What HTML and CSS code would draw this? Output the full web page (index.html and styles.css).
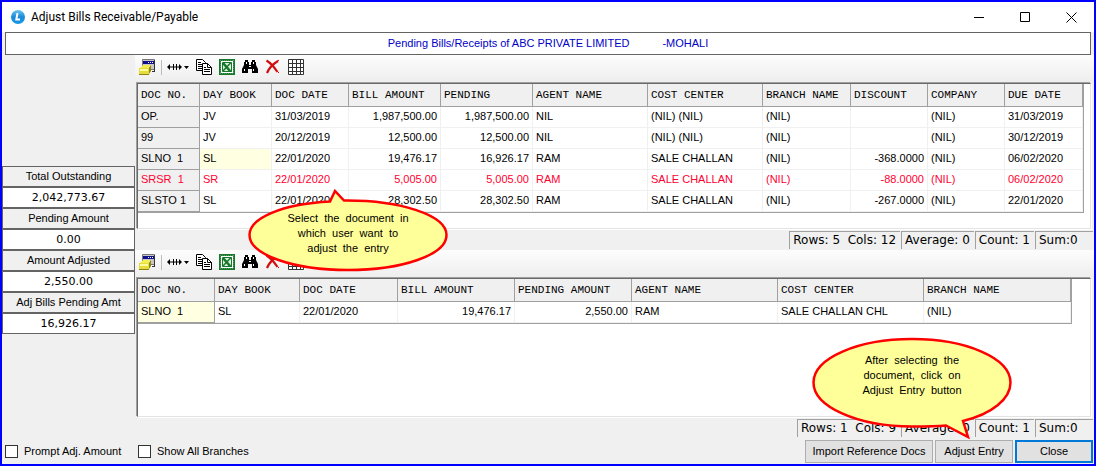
FILE: index.html
```html
<!DOCTYPE html>
<html lang="en">
<head>
	<meta charset="UTF-8">
	<title>Adjust Bills Receivable/Payable</title>
	<link rel="stylesheet" href="styles.css">
</head>
<body>
	<!-- toolbar icons, used by both grids -->
	<svg class="icons" width="0" height="0" aria-hidden="true">
		<symbol id="i-form" viewBox="0 0 16 16">
			<path fill="#c8c8c8" stroke="#777" d="M3.5.5h12v10h-12z"/>
			<path fill="#10108c" d="M4 2h11v3H4z"/>
			<path fill="#fff" d="M9 3h1v1H9zM11 3h1v1h-1zM13 3h1v1h-1z"/>
			<path fill="#333" d="M15 1h1v12h-3v-1h2z"/>
			<path fill="#f4ee52" d="M1 9l3-3h8l-2 3z"/>
			<path fill="#e6dc3c" d="M0 9h10v6H0z"/>
			<path fill="#fffca0" d="M1 10h8v2H1z"/>
			<path fill="#8c8410" d="M10 9l2-3v6l-2 3zM0 15h10v1H0z"/>
		</symbol>
		<symbol id="i-width" viewBox="0 0 22 16">
			<path fill="#000" d="M0 8l3-3v2.500h3V5h1v2.500h2V5h1v2.500h2V5l3 3-3 3V8.500h-2V11H9V8.500H7V11H6V8.500H3V11zM17 7h5l-2.500 3z"/>
		</symbol>
		<symbol id="i-copy" viewBox="0 0 16 16">
			<path fill="#fff" stroke="#000" d="M.5.5h6l3 3v8h-9z"/>
			<path stroke="#000" d="M2 3.500h3M2 5.500h5M2 7.500h5M2 9.500h5"/>
			<path fill="#fff" stroke="#000" d="M6.500 4.500h5l4 4v7h-9z"/>
			<path fill="none" stroke="#000" d="M11.500 4.500v4h4M8 8.500h2M8 10.500h6M8 12.500h6"/>
		</symbol>
		<symbol id="i-excel" viewBox="0 0 16 16">
			<path fill="#fff" stroke="#17772a" stroke-width="2" d="M1 1h14v14H1z"/>
			<path fill="none" stroke="#4f9c5e" stroke-dasharray="1 1" d="M1 1.500h14M1 14.500h14M1.500 1v14M14.500 1v14"/>
			<path fill="#dcefe0" stroke="#17772a" d="M3.500 3.500h9v9h-9z"/>
			<path stroke="#17772a" stroke-width="2.500" d="M4 4l7 8"/>
			<path stroke="#17772a" stroke-width="1.500" d="M12 3.500L4 12M9 12h4"/>
		</symbol>
		<symbol id="i-find" viewBox="0 0 16 16">
			<path fill="#000" d="M3 1h3v2h1v3h2V3h1V1h3v2h1v3l2 4v4h-6v-4H6v4H0v-4l2-4V3h1z"/>
			<path fill="#fff" d="M4 3h1v2H4zM11 3h1v2h-1zM2 10h1v2H2zM11 10h1v2h-1zM7 7h2v1H7z"/>
		</symbol>
		<symbol id="i-delete" viewBox="0 0 16 16">
			<path fill="none" stroke="#d01010" stroke-width="2.200" d="M1.500 1.500c5 3 8 7 11 11.500M13 2C8 5 4 9 2 14"/>
			<path stroke="#d01010" d="M12 2.500l2-1.500M13 13l1 1"/>
		</symbol>
		<symbol id="i-grid" viewBox="0 0 16 16">
			<path fill="#fff" stroke="#333" d="M.5.5h15v15H.5z"/>
			<path stroke="#333" d="M4.500 0v16M8.500 0v16M12.500 0v16M0 4.500h16M0 8.500h16M0 12.500h16"/>
		</symbol>
	</svg>

	<div class="window">
		<header class="titlebar">
			<svg class="logo" viewBox="0 0 14 14" aria-hidden="true">
				<defs>
					<linearGradient id="ball" x1="0" y1="0" x2="0" y2="1">
						<stop offset="0" stop-color="#6cc4f4"/>
						<stop offset=".5" stop-color="#1c8ad8"/>
						<stop offset="1" stop-color="#1498e8"/>
					</linearGradient>
				</defs>
				<circle cx="7" cy="7" r="7" fill="url(#ball)"/>
				<path fill="none" stroke="#fff" stroke-width="2" d="M6.500 3L5.300 9.500H9"/>
			</svg>
			<h1>Adjust Bills Receivable/Payable</h1>
			<div class="winbtns">
				<button type="button" aria-label="Minimize"><svg viewBox="0 0 11 11"><path d="M0 5.500h10"/></svg></button>
				<button type="button" aria-label="Maximize"><svg viewBox="0 0 11 11"><path d="M.5.5h9v9h-9z"/></svg></button>
				<button type="button" aria-label="Close window"><svg viewBox="0 0 11 11"><path d="M.5.5l10 10M10.500.5l-10 10"/></svg></button>
			</div>
		</header>

		<div class="caption"><span>Pending Bills/Receipts of ABC PRIVATE LIMITED</span><span>-MOHALI</span></div>

		<div class="content">
			<dl class="totals">
				<dt>Total Outstanding</dt>
				<dd>2,042,773.67</dd>
				<dt>Pending Amount</dt>
				<dd>0.00</dd>
				<dt>Amount Adjusted</dt>
				<dd>2,550.00</dd>
				<dt>Adj Bills Pending Amt</dt>
				<dd>16,926.17</dd>
			</dl>

			<main class="panes">
				<section class="pane">
					<div class="toolbar">
						<button type="button" aria-label="Form"><svg><use href="#i-form"/></svg></button>
						<i class="sep"></i>
						<button type="button" class="wide" aria-label="Column width"><svg><use href="#i-width"/></svg></button>
						<button type="button" aria-label="Copy"><svg><use href="#i-copy"/></svg></button>
						<button type="button" aria-label="Excel"><svg><use href="#i-excel"/></svg></button>
						<button type="button" aria-label="Find"><svg><use href="#i-find"/></svg></button>
						<button type="button" aria-label="Delete"><svg><use href="#i-delete"/></svg></button>
						<button type="button" aria-label="Grid lines"><svg><use href="#i-grid"/></svg></button>
					</div>
					<div class="grid">
						<table class="bills">
							<colgroup>
								<col class="w62"><col class="w72"><col class="w77"><col class="w92"><col class="w92"><col class="w115"><col class="w115"><col class="w88"><col class="w77"><col class="w77"><col class="w78">
							</colgroup>
							<thead>
								<tr><th>DOC NO.</th><th>DAY BOOK</th><th>DOC DATE</th><th>BILL AMOUNT</th><th>PENDING</th><th>AGENT NAME</th><th>COST CENTER</th><th>BRANCH NAME</th><th>DISCOUNT</th><th>COMPANY</th><th>DUE DATE</th></tr>
							</thead>
							<tbody>
								<tr><td class="fixed">OP.</td><td>JV</td><td>31/03/2019</td><td class="num">1,987,500.00</td><td class="num">1,987,500.00</td><td>NIL</td><td>(NIL) (NIL)</td><td>(NIL)</td><td class="num"></td><td>(NIL)</td><td>31/03/2019</td></tr>
								<tr><td class="fixed">99</td><td>JV</td><td>20/12/2019</td><td class="num">12,500.00</td><td class="num">12,500.00</td><td>NIL</td><td>(NIL) (NIL)</td><td>(NIL)</td><td class="num"></td><td>(NIL)</td><td>30/12/2019</td></tr>
								<tr><td class="fixed">SLNO  1</td><td class="current">SL</td><td>22/01/2020</td><td class="num">19,476.17</td><td class="num">16,926.17</td><td>RAM</td><td>SALE CHALLAN</td><td>(NIL)</td><td class="num">-368.0000</td><td>(NIL)</td><td>06/02/2020</td></tr>
								<tr class="red"><td class="fixed">SRSR  1</td><td>SR</td><td>22/01/2020</td><td class="num">5,005.00</td><td class="num">5,005.00</td><td>RAM</td><td>SALE CHALLAN</td><td>(NIL)</td><td class="num">-88.0000</td><td>(NIL)</td><td>06/02/2020</td></tr>
								<tr><td class="fixed">SLSTO 1</td><td>SL</td><td>22/01/2020</td><td class="num">28,302.50</td><td class="num">28,302.50</td><td>RAM</td><td>SALE CHALLAN</td><td>(NIL)</td><td class="num">-267.0000</td><td>(NIL)</td><td>22/01/2020</td></tr>
							</tbody>
						</table>
					</div>
					<div class="status"><span>Rows: 5  Cols: 12</span><span>Average: 0</span><span>Count: 1</span><span class="sum">Sum:0</span></div>
					<div class="callout pick">
						<svg viewBox="0 0 200 84" aria-hidden="true"><path d="M82 12.500L87 2l9 9.500C152 11 198.500 26 198.500 46S154 81 100 81 1.500 66 1.500 46C1.500 29 34 15 82 12.500z"/></svg>
						<p>Select  the  document  in
which  user  want  to
adjust  the  entry</p>
					</div>
				</section>

				<section class="pane fill">
					<div class="toolbar">
						<button type="button" aria-label="Form"><svg><use href="#i-form"/></svg></button>
						<i class="sep"></i>
						<button type="button" class="wide" aria-label="Column width"><svg><use href="#i-width"/></svg></button>
						<button type="button" aria-label="Copy"><svg><use href="#i-copy"/></svg></button>
						<button type="button" aria-label="Excel"><svg><use href="#i-excel"/></svg></button>
						<button type="button" aria-label="Find"><svg><use href="#i-find"/></svg></button>
						<button type="button" aria-label="Delete"><svg><use href="#i-delete"/></svg></button>
						<button type="button" aria-label="Grid lines"><svg><use href="#i-grid"/></svg></button>
					</div>
					<div class="grid">
						<table class="adjusted">
							<colgroup>
								<col class="w77"><col class="w85"><col class="w98"><col class="w117"><col class="w117"><col class="w146"><col class="w146"><col class="w147">
							</colgroup>
							<thead>
								<tr><th>DOC NO.</th><th>DAY BOOK</th><th>DOC DATE</th><th>BILL AMOUNT</th><th>PENDING AMOUNT</th><th>AGENT NAME</th><th>COST CENTER</th><th>BRANCH NAME</th></tr>
							</thead>
							<tbody>
								<tr><td class="fixed current">SLNO  1</td><td>SL</td><td>22/01/2020</td><td class="num">19,476.17</td><td class="num">2,550.00</td><td>RAM</td><td>SALE CHALLAN CHL</td><td>(NIL)</td></tr>
							</tbody>
						</table>
					</div>
					<div class="status"><span>Rows: 1  Cols: 9</span><span>Average: 0</span><span>Count: 1</span><span class="sum">Sum:0</span></div>
					<div class="callout adjust">
						<svg viewBox="0 0 200 102" aria-hidden="true"><path d="M134 88.500L156 100l-5-16c29-7 47.500-22 47.500-38.500C198.500 21 154 2 100 2S1.500 21 1.500 45.500 46 89.500 100 89.500c12 0 24 0 34-1z"/></svg>
						<p>After  selecting  the
document,  click  on
Adjust  Entry  button</p>
					</div>
				</section>
			</main>
		</div>

		<footer class="footer">
			<label class="prompt"><input type="checkbox">Prompt Adj. Amount</label>
			<label><input type="checkbox">Show All Branches</label>
			<div class="actions">
				<button type="button" class="import">Import Reference Docs</button>
				<button type="button">Adjust Entry</button>
				<button type="button" class="default">Close</button>
			</div>
		</footer>
	</div>
</body>
</html>
```
FILE: styles.css
```css
*{
	box-sizing: border-box;
}
body{
	margin: 0;
	font: 11px/13px "Liberation Sans",Arial,sans-serif;
	color: #000;
}
.icons{
	position: absolute;
}
button{
	font: inherit;
	color: inherit;
	padding: 0;
}
.window{
	display: flex;
	flex-direction: column;
	min-height: 100vh;
	border: 2px solid #0000ff;
	background: #f0f0f0;
}

/* title bar */
.titlebar{
	display: flex;
	align-items: center;
	height: 30px;
	padding-left: 9px;
	background: #fff;
}
	.titlebar .logo{
		width: 14px;
		height: 14px;
	}
	.titlebar h1{
		flex: 1;
		margin: 0 0 0 6px;
		font: 12px/16px Roboto,"Segoe UI",sans-serif;
	}
	.winbtns{
		display: flex;
	}
		.winbtns button{
			width: 46px;
			height: 28px;
			border: 0;
			background: none;
		}
		.winbtns svg{
			display: block;
			width: 11px;
			height: 11px;
			margin: 0 auto;
			fill: none;
			stroke: #000;
		}
.caption{
	display: flex;
	justify-content: center;
	gap: 33px;
	margin: 0 3px;
	border: 1px solid #646464;
	background: #fff;
	color: #0000c8;
	line-height: 21px;
}

.content{
	display: flex;
	flex: 1;
}
	.totals{
		width: 133px;
		margin: 111px 0 0;
		text-align: center;
	}
		.totals dt,.totals dd{
			margin: 0;
			height: 21px;
			border: 1px solid #646464;
			line-height: 19px;
		}
		.totals dd{
			background: #fff;
			font-family: "DejaVu Sans",Verdana,sans-serif;
		}
	.panes{
		display: flex;
		flex: 1;
		flex-direction: column;
		min-width: 0;
	}
		.pane{
			position: relative;
			display: flex;
			flex-direction: column;
		}
		.pane.fill{
			flex: 1;
		}

.toolbar{
	display: flex;
	align-items: center;
	height: 27px;
	padding: 0 0 3px 4px;
	gap: 7px;
	background: linear-gradient(#fdfdfd,#eeeeee);
}
	.toolbar button{
		width: 16px;
		height: 16px;
		border: 0;
		background: none;
	}
	.toolbar .wide{
		width: 22px;
	}
	.toolbar svg{
		display: block;
		width: 100%;
		height: 16px;
	}
	.toolbar .sep{
		width: 1px;
		height: 15px;
		margin: 0 -2px 0 -1px;
		background: #bdbdbd;
	}

.grid{
	flex: 1;
	min-height: 146px;
	margin: 1px 3px 1px 2px;
	border: 1px solid #e3e3e3;
	border-top-color: #696969;
	border-left-color: #696969;
	background: #fff;
	box-shadow: -1px -1px 0 #a0a0a0,1px 1px 0 #fff;
	overflow: hidden;
}
.fill .grid{
	min-height: 60px;
}
	.grid table{
		table-layout: fixed;
		border-collapse: separate;
		border-spacing: 0;
		border-right: 1px solid #a0a0a0;
		border-bottom: 1px solid #a0a0a0;
	}
	.bills{
		width: 946px;
	}
	.adjusted{
		width: 934px;
	}
	.grid th,.grid td{
		padding: 0 3px;
		text-align: left;
		white-space: pre;
		border-right: 1px solid #f0f0f0;
		border-bottom: 1px solid #f0f0f0;
	}
	.grid th{
		height: 23px;
		background: #f0f0f0;
		border-color: #a0a0a0;
		font: 11px/13px "Liberation Mono","Courier New",monospace;
	}
	.grid td{
		height: 21px;
		padding-bottom: 2px;
	}
	.grid .num{
		text-align: right;
	}
	.grid .fixed{
		background: #f0f0f0;
		border-color: #a0a0a0;
	}
	.grid .current{
		background: #ffffe1;
	}
	.grid .red{
		color: #ff0030;
	}
	.w62{ width: 62px; }
	.w72{ width: 72px; }
	.w77{ width: 77px; }
	.w78{ width: 78px; }
	.w85{ width: 85px; }
	.w88{ width: 88px; }
	.w92{ width: 92px; }
	.w98{ width: 98px; }
	.w115{ width: 115px; }
	.w117{ width: 117px; }
	.w146{ width: 146px; }
	.w147{ width: 147px; }

.status{
	display: flex;
	justify-content: flex-end;
	gap: 1px;
	height: 20px;
	padding: 1px 1px 1px 0;
}
	.status span{
		padding: 0 4px 0 3px;
		border-top: 1px solid #a0a0a0;
		border-left: 1px solid #a0a0a0;
		font: 12px/17px "DejaVu Sans",Verdana,sans-serif;
		white-space: pre;
	}
	.status .sum{
		width: 58px;
	}

/* balloons over the grids */
.callout{
	position: absolute;
	z-index: 1;
	width: 200px;
}
	.callout svg{
		display: block;
		width: 100%;
		fill: #ffff99;
		stroke: #ff0000;
		stroke-width: 2.500;
	}
	.callout p{
		position: absolute;
		left: 0;
		right: 0;
		margin: 0;
		text-align: center;
		line-height: 15px;
		white-space: pre;
	}
	.pick{
		left: 113px;
		top: 134px;
	}
	.pick p{
		top: 22px;
	}
	.adjust{
		right: 82px;
		bottom: -1px;
	}
	.adjust p{
		top: 16px;
	}

.footer{
	display: flex;
	align-items: center;
	height: 26px;
	padding: 0 1px 0 3px;
}
	.footer label{
		display: flex;
		align-items: center;
		gap: 6px;
	}
	.footer .prompt{
		width: 133px;
	}
	.footer input{
		appearance: none;
		width: 13px;
		height: 13px;
		margin: 0;
		border: 1px solid #333;
		background: #fff;
	}
	.footer input:checked{
		background: #0078d7;
	}
	.actions{
		display: flex;
		gap: 2px;
		margin-left: auto;
	}
		.actions button{
			width: 78px;
			height: 23px;
			border: 1px solid #adadad;
			background: #e1e1e1;
		}
		.actions .import{
			width: 128px;
		}
		.actions .default{
			border: 2px solid #0078d7;
		}
```
